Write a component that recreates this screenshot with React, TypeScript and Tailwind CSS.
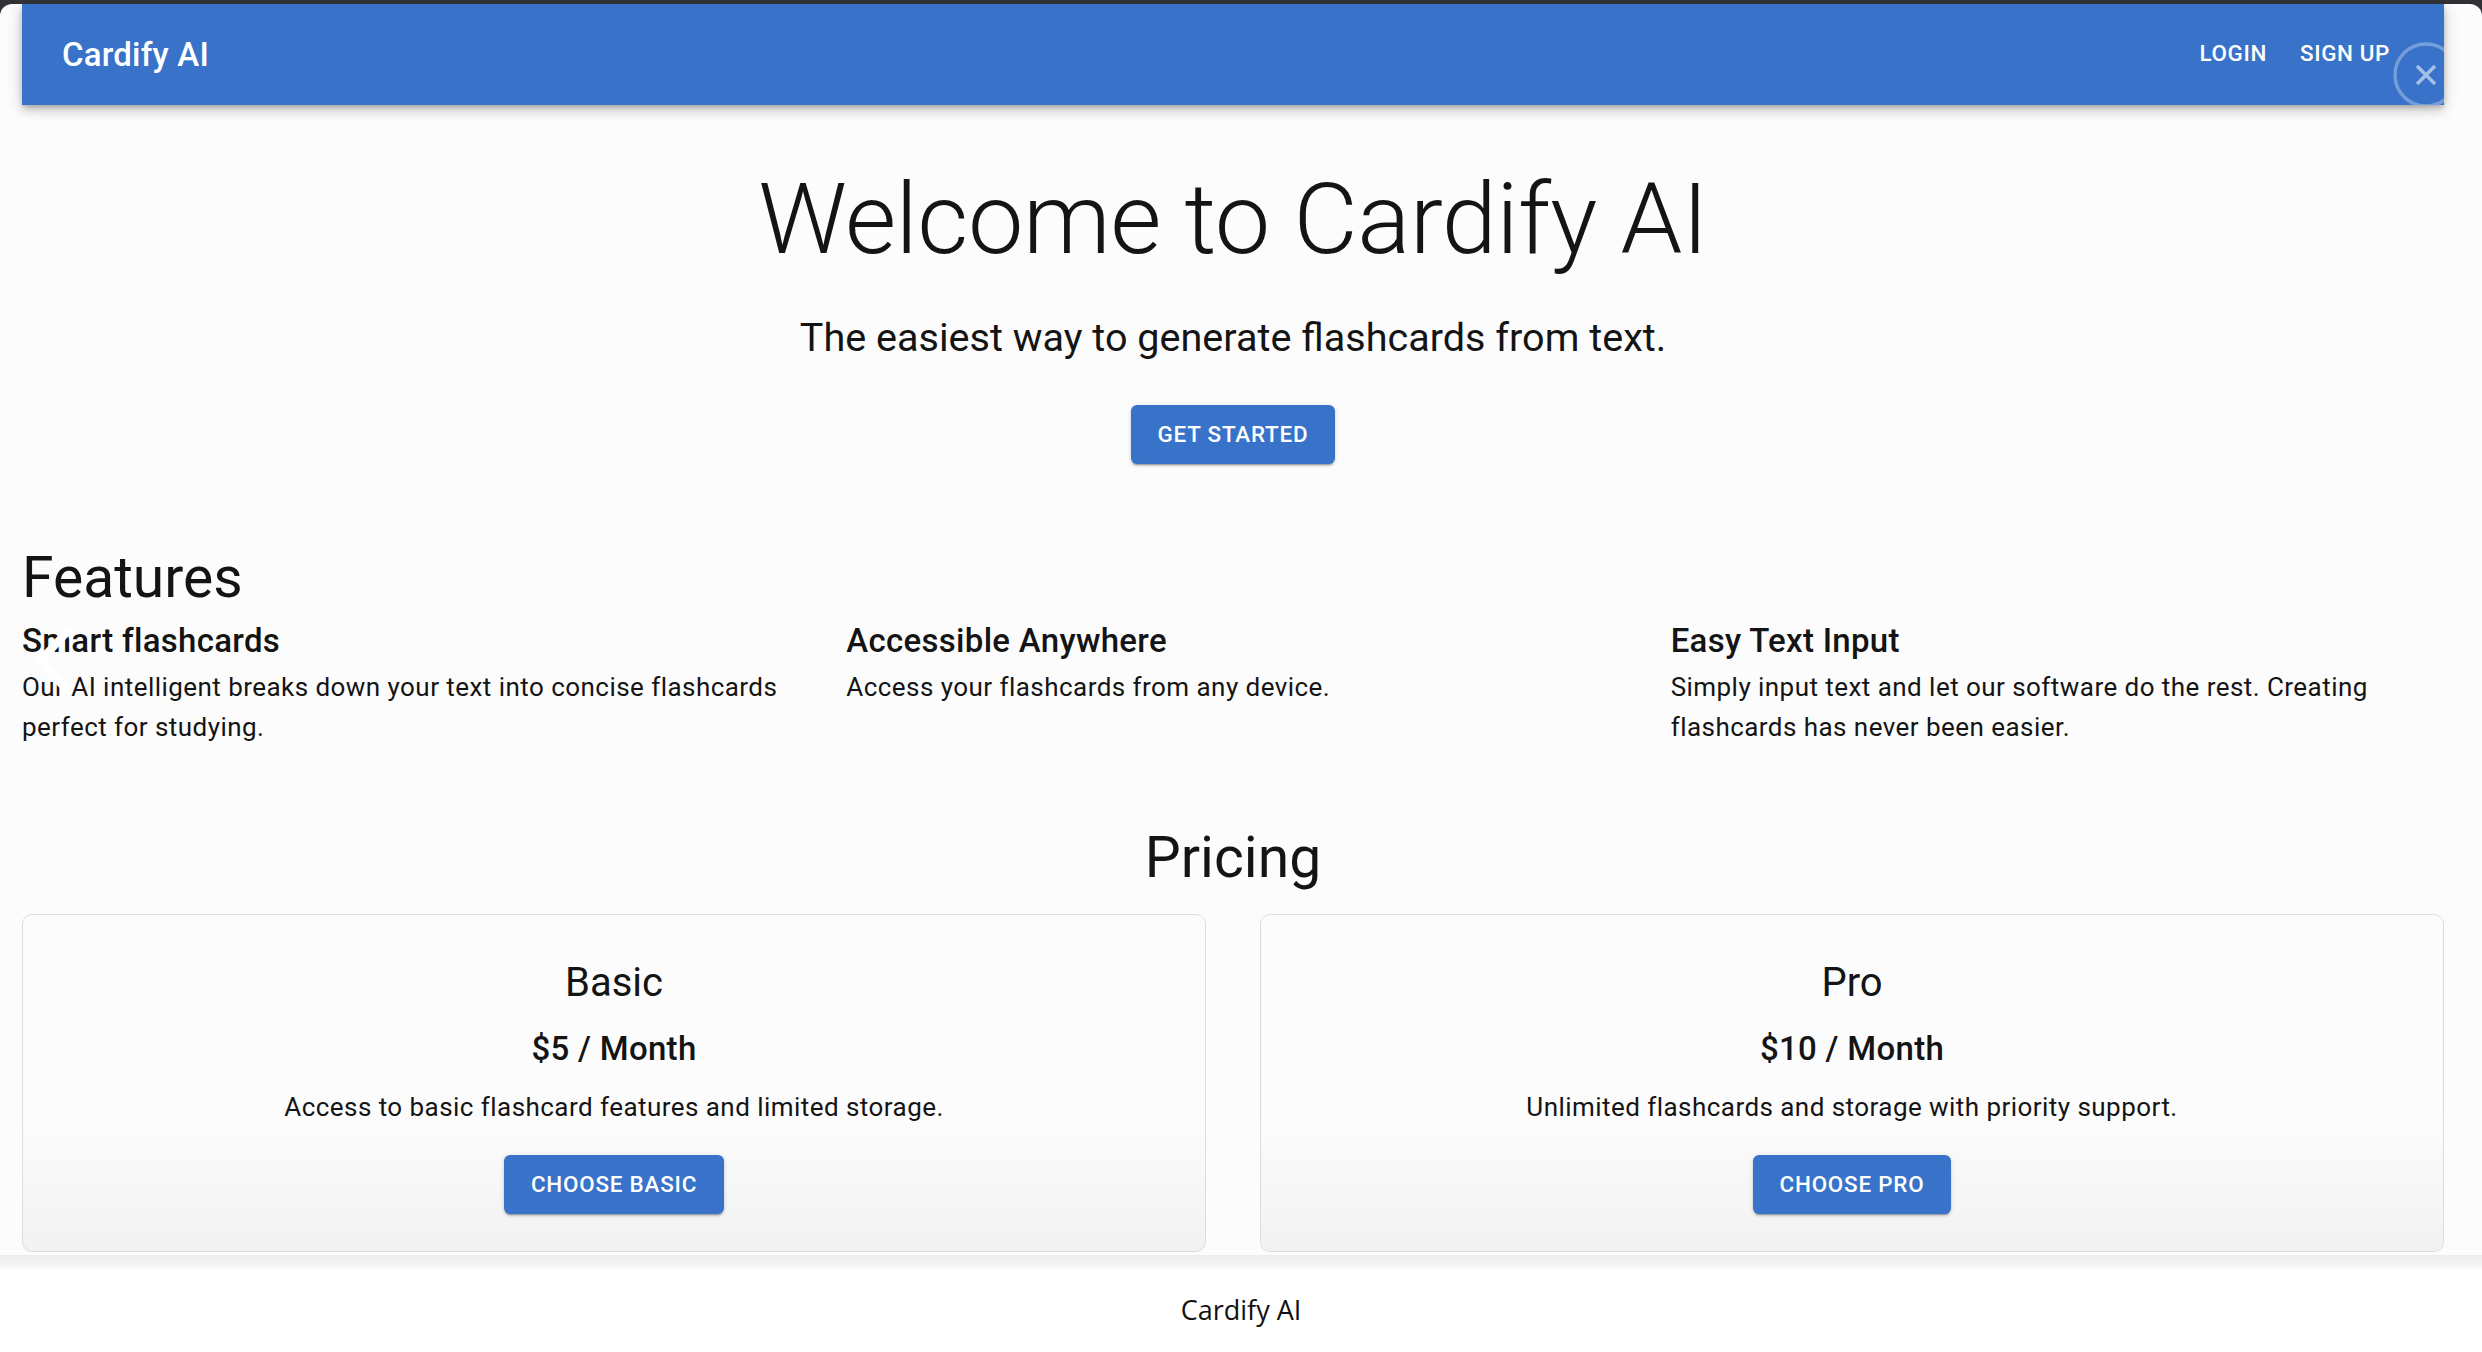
import React from "react"

const features = [
  {
    title: "Smart flashcards",
    body: "Our AI intelligent breaks down your text into concise flashcards perfect for studying.",
  },
  {
    title: "Accessible Anywhere",
    body: "Access your flashcards from any device.",
  },
  {
    title: "Easy Text Input",
    body: "Simply input text and let our software do the rest. Creating flashcards has never been easier.",
  },
]

const plans = [
  {
    name: "Basic",
    price: "$5 / Month",
    body: "Access to basic flashcard features and limited storage.",
    cta: "Choose Basic",
  },
  {
    name: "Pro",
    price: "$10 / Month",
    body: "Unlimited flashcards and storage with priority support.",
    cta: "Choose Pro",
  },
]

function BlueButton({ label }: { label: string }) {
  return (
    <button className="h-[59px] px-[27px] rounded-[6px] bg-[#3873c9] text-white text-[22.4px] font-medium uppercase tracking-[0.8px] shadow-[0_3px_1px_-2px_rgba(0,0,0,0.2),0_2px_2px_0_rgba(0,0,0,0.14),0_1px_5px_0_rgba(0,0,0,0.12)]">
      {label}
    </button>
  )
}

export default function App() {
  return (
    <div className="w-full h-[1352px] bg-[#2f3135] pt-[4px] overflow-hidden font-['Roboto',sans-serif]">
      <div className="h-full bg-[#fcfcfc] rounded-t-[12px] flex flex-col overflow-hidden">

        {/* Main */}
        <div className="flex-1 pl-[22px] pr-[38px] text-[#141414]">

          {/* App bar */}
          <div className="relative h-[101px] bg-[#3873c9] overflow-hidden flex items-center justify-between pl-[40px] pr-[54px] shadow-[0_3px_5px_-1px_rgba(0,0,0,0.2),0_6px_10px_0_rgba(0,0,0,0.14),0_1px_18px_0_rgba(0,0,0,0.12)]">
            <span className="text-white text-[33px] font-medium tracking-[0.2px]">Cardify AI</span>
            <div className="flex items-center gap-[33px] text-white text-[22.4px] font-medium uppercase tracking-[0.64px] pb-[2px]">
              <span>Login</span>
              <span>Sign Up</span>
            </div>

            {/* close overlay */}
            <svg className="absolute left-[2370px] top-[36px]" width="70" height="70" viewBox="0 0 70 70">
              <circle cx="34" cy="35" r="31" fill="none" stroke="rgba(255,255,255,0.3)" strokeWidth="3.5" />
              <path d="M25 26 L43 44 M43 26 L25 44" stroke="rgba(255,255,255,0.55)" strokeWidth="3.5" />
            </svg>
          </div>

          {/* Hero */}
          <div className="flex flex-col items-center text-center">
            <h1 className="mt-[57px] text-[99px] font-light leading-[115px] tracking-[-0.5px]">
              Welcome to Cardify AI
            </h1>
            <p className="mt-[35px] text-[39.6px] leading-[51px]">
              The easiest way to generate flashcards from text.
            </p>
            <div className="mt-[42px]">
              <BlueButton label="Get Started" />
            </div>
          </div>

          {/* Features */}
          <h2 className="mt-[79px] text-[57px] leading-[69px]">Features</h2>
          <div className="relative grid grid-cols-3 gap-x-[51px]">
            {features.map((f) => (
              <div key={f.title} className="pt-[3px]">
                <h3 className="text-[33px] font-medium leading-[51px] tracking-[0.3px]">{f.title}</h3>
                <p className="mt-[2px] text-[26px] leading-[39.5px] tracking-[0.45px]">{f.body}</p>
              </div>
            ))}

            {/* carousel arrow overlay */}
            <svg className="absolute left-[12px] top-[16px]" width="40" height="66" viewBox="0 0 40 66">
              <path d="M33 4 L6 33 L33 62" fill="none" stroke="white" strokeWidth="8" strokeLinecap="round" strokeLinejoin="round" />
            </svg>
          </div>

          {/* Pricing */}
          <h2 className="mt-[76px] text-center text-[57px] leading-[69px]">Pricing</h2>
          <div className="mt-[22px] grid grid-cols-2 gap-x-[54px]">
            {plans.map((p) => (
              <div
                key={p.name}
                className="h-[338px] rounded-[10px] border-[1.5px] border-[#dddddd] bg-gradient-to-b from-[#fcfcfc] from-60% to-[#f2f2f2] flex flex-col items-center pt-[42px] text-center"
              >
                <h4 className="text-[40px] leading-[51px]">{p.name}</h4>
                <div className="mt-[15px] text-[33px] font-medium leading-[51px] tracking-[0.3px]">{p.price}</div>
                <p className="mt-[14px] text-[26px] leading-[38px] tracking-[0.45px]">{p.body}</p>
                <div className="mt-[29px]">
                  <BlueButton label={p.cta} />
                </div>
              </div>
            ))}
          </div>
        </div>

        {/* bottom band */}
        <div className="h-[14px] bg-gradient-to-b from-[#ececec] to-[#f8f8f8]" />

        {/* Footer */}
        <footer className="h-[83px] bg-white flex items-center justify-center">
          <span className="text-[27px] text-[#111] font-['Open_Sans',sans-serif]">Cardify AI</span>
        </footer>
      </div>
    </div>
  )
}
